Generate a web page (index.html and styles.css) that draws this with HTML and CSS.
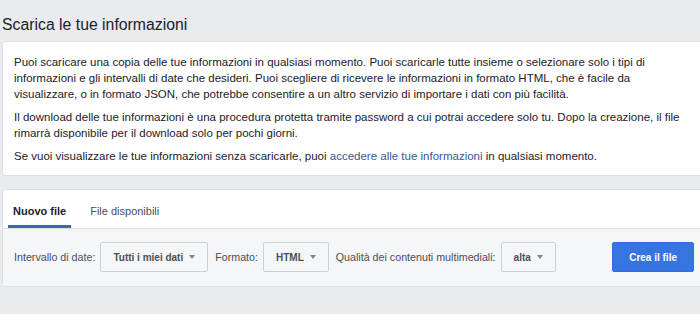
FILE: index.html
```html
<!DOCTYPE html>
<html lang="it">
<head>
<meta charset="utf-8">
<title>Scarica le tue informazioni</title>
<link rel="stylesheet" href="styles.css">
</head>
<body>
<div class="page">
  <h1 class="title">Scarica le tue informazioni</h1>
  <div class="card intro">
    <p>Puoi scaricare una copia delle tue informazioni in qualsiasi momento. Puoi scaricarle tutte insieme o selezionare solo i tipi di<br>informazioni e gli intervalli di date che desideri. Puoi scegliere di ricevere le informazioni in formato HTML, che è facile da<br>visualizzare, o in formato JSON, che potrebbe consentire a un altro servizio di importare i dati con più facilità.</p>
    <p>Il download delle tue informazioni è una procedura protetta tramite password a cui potrai accedere solo tu. Dopo la creazione, il file<br>rimarrà disponibile per il download solo per pochi giorni.</p>
    <p>Se vuoi visualizzare le tue informazioni senza scaricarle, puoi <a class="link" href="#">accedere alle tue informazioni</a> in qualsiasi momento.</p>
  </div>
  <div class="card download">
    <div class="tabs">
      <div class="tab active">Nuovo file</div>
      <div class="tab">File disponibili</div>
    </div>
    <div class="toolbar">
      <span class="label">Intervallo di date:</span>
      <button class="select">Tutti i miei dati<span class="caret"></span></button>
      <span class="label">Formato:</span>
      <button class="select">HTML<span class="caret"></span></button>
      <span class="label">Qualità dei contenuti multimediali:</span>
      <button class="select">alta<span class="caret"></span></button>
      <button class="primary">Crea il file</button>
    </div>
  </div>
</div>
</body>
</html>
```
FILE: styles.css
```css
html, body {
  margin: 0;
  padding: 0;
}
body {
  background: #e9ebee;
  overflow: hidden;
  font-family: "Liberation Sans", Arial, Helvetica, sans-serif;
  color: #1d2129;
}
.page {
  padding: 15px 0 0 2px;
}
.title {
  margin: 0 0 6px 0;
  font-size: 15.8px;
  line-height: 20px;
  font-weight: normal;
  color: #1d2129;
}
.card {
  width: 704px;
  box-sizing: border-box;
  background: #fff;
  border: 1px solid #dddfe2;
  border-radius: 3px;
}
.intro {
  padding: 12px 0 11px 11px;
  font-size: 11.5px;
  line-height: 16px;
}
.intro p {
  margin: 0 0 7px;
  white-space: nowrap;
}
.intro p:last-child {
  margin-bottom: 0;
}
.link {
  color: #385898;
  text-decoration: none;
}
.download {
  margin-top: 13px;
  overflow: hidden;
}
.tabs {
  display: flex;
  height: 38px;
  padding-left: 5px;
  border-bottom: 1px solid #dddfe2;
}
.tab {
  display: flex;
  align-items: center;
  padding: 3px 5px 0;
  margin-right: 14px;
  font-size: 11px;
  color: #4b4f56;
}
.tab.active {
  font-weight: bold;
  color: #1d2129;
  box-shadow: inset 0 -3px 0 #4267b2;
}
.toolbar {
  display: flex;
  align-items: center;
  padding: 13px 11px 14px;
  background: #f5f6f7;
}
.label {
  font-size: 10.7px;
  color: #4b4f56;
  margin-right: 5px;
  white-space: nowrap;
}
.select {
  display: flex;
  align-items: center;
  height: 30px;
  padding: 0 12px;
  margin: 0 7px 0 0;
  border: 1px solid #ccd0d5;
  border-radius: 2px;
  background: #f5f6f7;
  font-family: inherit;
  font-size: 10px;
  font-weight: bold;
  color: #4b4f56;
  white-space: nowrap;
}
.caret {
  display: inline-block;
  width: 0;
  height: 0;
  margin-left: 6px;
  border-left: 3.5px solid transparent;
  border-right: 3.5px solid transparent;
  border-top: 4px solid #7f848c;
}
.primary {
  margin-left: auto;
  height: 30px;
  padding: 0 16px;
  border: 1px solid #3370dc;
  border-radius: 2px;
  background: #3674e0;
  color: #fff;
  font-family: inherit;
  font-size: 10px;
  font-weight: bold;
  white-space: nowrap;
}
```
